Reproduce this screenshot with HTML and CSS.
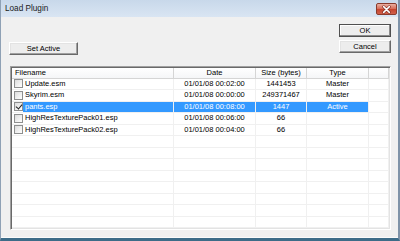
FILE: index.html
```html
<!DOCTYPE html>
<html lang="en">
  <head>
    <meta charset="UTF-8" />
    <title>Load Plugin</title>
    <link rel="stylesheet" href="styles.css">
  </head>

  <body>
    <div class="window">
      <div class="titlebar">
        <span class="title">Load Plugin</span>
        <button class="close">
          <svg width="20" height="11" viewBox="0 0 20 11">
            <path d="M7 2.5 L13 8.5 M13 2.5 L7 8.5" stroke="#7a2a20" stroke-width="3" stroke-linecap="round" />
            <path d="M7 2.5 L13 8.5 M13 2.5 L7 8.5" stroke="#fff" stroke-width="1.6" stroke-linecap="round" />
          </svg>
        </button>
      </div>

      <div class="client">
        <div class="actions">
          <button class="btn set-active">Set Active</button>
          <div class="dialog-buttons">
            <button class="btn default">OK</button>
            <button class="btn">Cancel</button>
          </div>
        </div>

        <div class="list">
          <div class="row header">
            <div class="cell name">Filename</div>
            <div class="cell">Date</div>
            <div class="cell">Size (bytes)</div>
            <div class="cell">Type</div>
            <div class="cell"></div>
          </div>
          <div class="row">
            <div class="cell name"><i class="check"></i><span class="label">Update.esm</span></div>
            <div class="cell">01/01/08 00:02:00</div>
            <div class="cell">1441453</div>
            <div class="cell">Master</div>
            <div class="cell"></div>
          </div>
          <div class="row">
            <div class="cell name"><i class="check"></i><span class="label">Skyrim.esm</span></div>
            <div class="cell">01/01/08 00:00:00</div>
            <div class="cell">249371467</div>
            <div class="cell">Master</div>
            <div class="cell"></div>
          </div>
          <div class="row selected">
            <div class="cell name"><i class="check checked"></i><span class="label">pants.esp</span></div>
            <div class="cell">01/01/08 00:08:00</div>
            <div class="cell">1447</div>
            <div class="cell">Active</div>
            <div class="cell"></div>
          </div>
          <div class="row">
            <div class="cell name"><i class="check"></i><span class="label">HighResTexturePack01.esp</span></div>
            <div class="cell">01/01/08 00:06:00</div>
            <div class="cell">66</div>
            <div class="cell"></div>
            <div class="cell"></div>
          </div>
          <div class="row">
            <div class="cell name"><i class="check"></i><span class="label">HighResTexturePack02.esp</span></div>
            <div class="cell">01/01/08 00:04:00</div>
            <div class="cell">66</div>
            <div class="cell"></div>
            <div class="cell"></div>
          </div>
          <div class="row"><div class="cell"></div><div class="cell"></div><div class="cell"></div><div class="cell"></div><div class="cell"></div></div>
          <div class="row"><div class="cell"></div><div class="cell"></div><div class="cell"></div><div class="cell"></div><div class="cell"></div></div>
          <div class="row"><div class="cell"></div><div class="cell"></div><div class="cell"></div><div class="cell"></div><div class="cell"></div></div>
          <div class="row"><div class="cell"></div><div class="cell"></div><div class="cell"></div><div class="cell"></div><div class="cell"></div></div>
          <div class="row"><div class="cell"></div><div class="cell"></div><div class="cell"></div><div class="cell"></div><div class="cell"></div></div>
          <div class="row"><div class="cell"></div><div class="cell"></div><div class="cell"></div><div class="cell"></div><div class="cell"></div></div>
          <div class="row"><div class="cell"></div><div class="cell"></div><div class="cell"></div><div class="cell"></div><div class="cell"></div></div>
          <div class="row"><div class="cell"></div><div class="cell"></div><div class="cell"></div><div class="cell"></div><div class="cell"></div></div>
        </div>
      </div>
    </div>
  </body>
</html>
```

FILE: styles.css
```css
body {
  margin: 0;
  font-family: "Liberation Sans", Arial, sans-serif;
  font-size: 7.5px;
  color: #000;
}

.window {
  width: 400px;
  height: 241px;
  box-sizing: border-box;
  display: flex;
  flex-direction: column;
  background: #f0f0f0;
  border-left: 1px solid #8fa1b5;
  border-right: 2px solid #7f93a8;
  border-bottom: 3px solid #3d6c88;
  box-shadow: inset 0 -1px #fbfbfb;
  overflow: hidden;
}

.titlebar {
  height: 17px;
  flex-shrink: 0;
  display: flex;
  justify-content: space-between;
  align-items: flex-start;
  background: linear-gradient(#c8d8ea, #d9e5f3);
}

.title {
  font-size: 8.2px;
  line-height: 17px;
  padding-left: 4px;
  color: #1a1a1a;
}

.close {
  width: 21px;
  height: 12px;
  margin: 3px 1px 0 0;
  padding: 0;
  border: 1px solid #8a3b2c;
  border-radius: 2px;
  background: linear-gradient(#eab0a2, #d9705c 45%, #c7452f 55%, #d1604a);
  display: flex;
  align-items: center;
  justify-content: center;
}

.client {
  flex: 1;
  display: flex;
  flex-direction: column;
  padding: 7px 7px 5px 8px;
}

.actions {
  display: flex;
  justify-content: space-between;
  align-items: flex-start;
}

.btn {
  height: 13px;
  padding: 0;
  font-family: inherit;
  font-size: 7.5px;
  color: #000;
  background: #ededed;
  border: 1px solid;
  border-color: #fff #696969 #696969 #fff;
  box-shadow: inset -1px -1px #a0a0a0, inset 1px 1px #e3e3e3;
}

.set-active {
  width: 69px;
  margin-top: 18px;
}

.dialog-buttons {
  display: flex;
  flex-direction: column;
  gap: 3px;
  width: 52px;
}

.dialog-buttons .btn {
  width: 100%;
}

.btn.default {
  border-color: #505050;
  box-shadow: inset -1px -1px #8c8c8c, inset 1px 1px #fff;
}

.list {
  width: 381px;
  height: 164px;
  margin: 11px 0 0 1px;
  box-sizing: border-box;
  padding: 1px;
  background: #fff;
  border: 1px solid;
  border-color: #a0a0a0 #fff #fff #a0a0a0;
  box-shadow: inset 1px 1px #696969, inset -1px -1px #e3e3e3;
  overflow: hidden;
}

.row {
  display: grid;
  grid-template-columns: 162px 82px 51px 62px 1fr;
  height: 11.5px;
  line-height: 10.5px;
}

.cell {
  box-sizing: border-box;
  border-right: 1px solid #f0f0f0;
  border-bottom: 1px solid #f0f0f0;
  text-align: center;
  white-space: nowrap;
  overflow: hidden;
}

.cell.name {
  display: flex;
  align-items: center;
  text-align: left;
}

.row.header {
  height: 10.6px;
  line-height: 9.6px;
  background: linear-gradient(#fff, #f4f5f7);
}

.row.header .cell {
  border-right-color: #d5d5d5;
  border-bottom-color: #d5d5d5;
}

.row.header .cell.name {
  padding-left: 3px;
}

.check {
  width: 9px;
  height: 9px;
  margin-left: 2px;
  box-sizing: border-box;
  border: 1px solid #8e8f8f;
  background: linear-gradient(135deg, #dcdcdc, #fff);
  display: flex;
  align-items: center;
  justify-content: center;
}

.check.checked::after {
  content: "";
  width: 3px;
  height: 5px;
  margin-top: -2px;
  border: solid #222;
  border-width: 0 1.4px 1.4px 0;
  transform: rotate(40deg);
}

.label {
  flex: 1;
  align-self: stretch;
  padding-left: 2px;
}

.row.selected .cell:not(.name):not(:last-child),
.row.selected .label {
  background: #3399ff;
  color: #fff;
}
```
